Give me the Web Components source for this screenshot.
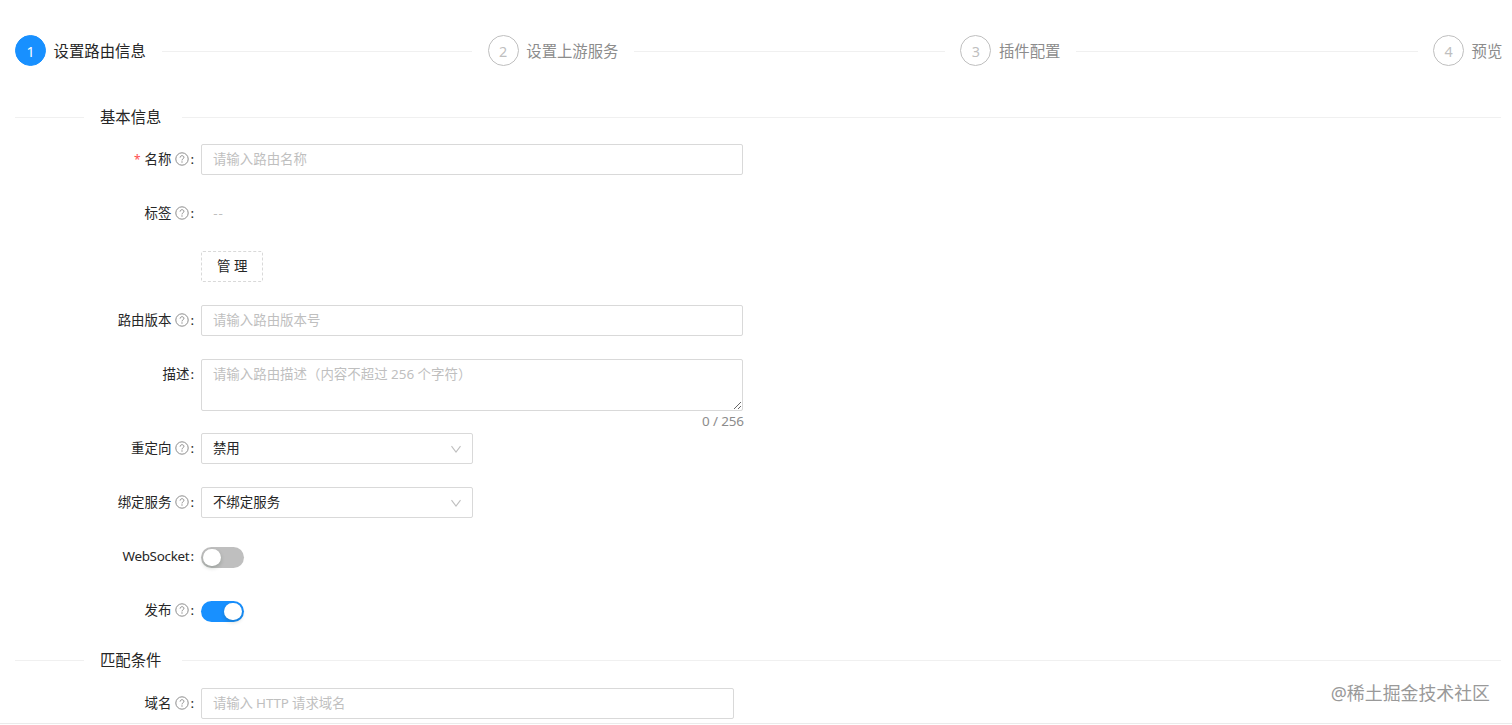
<!DOCTYPE html>
<html lang="zh-CN">
<head>
<meta charset="utf-8">
<title>设置路由信息</title>
<style>
    html, body {
        margin: 0;
        height: 725px;
        overflow: hidden;
        background: #fff;
    }
    body {
        font-family: "Noto Sans", "Noto Sans CJK SC", sans-serif;
        font-size: 13.44px;
        line-height: 21px;
        color: #262626;
    }
</style>
</head>
<body>
<route-page>
    <step-bar slot="steps">
        <step-item number="1" active>设置路由信息</step-item>
        <step-item number="2">设置上游服务</step-item>
        <step-item number="3">插件配置</step-item>
        <step-item number="4" last>预览</step-item>
    </step-bar>

    <section-divider>基本信息</section-divider>
    <form-row label="名称" required help><text-field placeholder="请输入路由名称"></text-field></form-row>
    <form-row label="标签" help><empty-value>--</empty-value></form-row>
    <form-row><dashed-button>管 理</dashed-button></form-row>
    <form-row label="路由版本" help><text-field placeholder="请输入路由版本号"></text-field></form-row>
    <form-row label="描述" class="tall"><text-block count="0 / 256" placeholder="请输入路由描述（内容不超过 256 个字符）"></text-block></form-row>
    <form-row label="重定向" help><select-box>禁用</select-box></form-row>
    <form-row label="绑定服务" help><select-box>不绑定服务</select-box></form-row>
    <form-row label="WebSocket" class="latin"><toggle-switch></toggle-switch></form-row>
    <form-row label="发布" help><toggle-switch checked></toggle-switch></form-row>

    <section-divider class="second">匹配条件</section-divider>
    <form-row label="域名" help><text-field class="short" placeholder="请输入 HTTP 请求域名"></text-field></form-row>

    <water-mark slot="mark">@稀土掘金技术社区</water-mark>
</route-page>

<script>
// Base class: renders the subclass template into an open shadow root
class BaseElement extends HTMLElement {
    constructor() {
        super();
        this.attachShadow({ mode: 'open' });
    }

    connectedCallback() {
        this.shadowRoot.innerHTML = this.render();
    }

    attr(name) {
        return this.getAttribute(name) || '';
    }
}

customElements.define('route-page', class extends BaseElement {
    render() {
        return `
            <style>
                :host {
                    display: block;
                    position: relative;
                    box-sizing: border-box;
                    height: 724px;
                    padding: 35px 11px 0 15px;
                    border-bottom: 1px solid #ebebeb;
                }
                .body { display: flex; flex-direction: column; }
                ::slotted(step-bar) { margin-bottom: 39px; }
                ::slotted(section-divider) { margin-bottom: 15px; }
                ::slotted(.second) { margin-top: 1px; margin-bottom: 15.6px; }
                ::slotted(form-row.tall) { height: 74.4px; margin-bottom: 0; }
            </style>
            <slot name="steps"></slot>
            <div class="body"><slot></slot></div>
            <slot name="mark"></slot>
        `;
    }
});

customElements.define('step-bar', class extends BaseElement {
    render() {
        return `
            <style>
                :host { display: flex; gap: 15.4px; margin-right: -3px; height: 32px; }
            </style>
            <slot></slot>
        `;
    }
});

customElements.define('step-item', class extends BaseElement {
    render() {
        return `
            <style>
                :host {
                    display: flex;
                    flex: 1;
                    align-items: center;
                    color: #8c8c8c;
                    font-size: 15.36px;
                    white-space: nowrap;
                }
                :host([last]) { flex: none; width: 71px; }
                :host([active]) { color: #262626; }
                .circle {
                    box-sizing: border-box;
                    flex: none;
                    width: 31px;
                    height: 31px;
                    margin: 0 7.6px 1px 0;
                    padding-top: 1px;
                    border: 1px solid #bfbfbf;
                    border-radius: 50%;
                    color: #bfbfbf;
                    font-size: 14.4px;
                    line-height: 29px;
                    text-align: center;
                }
                :host([active]) .circle { background: #1890ff; border-color: #1890ff; color: #fff; }
                .line { flex: 1; height: 1px; margin-left: 16px; background: #f0f0f0; }
                :host([last]) .line { display: none; }
            </style>
            <span class="circle">${this.attr('number')}</span>
            <slot></slot>
            <span class="line"></span>
        `;
    }
});

customElements.define('section-divider', class extends BaseElement {
    render() {
        return `
            <style>
                :host { display: flex; align-items: center; height: 23px; font-size: 15.36px; color: #262626; }
                i { height: 1px; background: #f0f0f0; }
                .left { width: 69px; margin-right: 16px; }
                .right { flex: 1; margin-left: 21px; }
            </style>
            <i class="left"></i><slot></slot><i class="right"></i>
        `;
    }
});

customElements.define('form-row', class extends BaseElement {
    render() {
        const label = this.attr('label');
        const star = this.hasAttribute('required') ? '<span class="star">*</span>' : '';
        const help = this.hasAttribute('help') ? '<help-icon></help-icon>' : '';
        return `
            <style>
                :host { display: flex; align-items: flex-start; height: 31px; margin-bottom: 22.75px; }
                .label {
                    display: flex;
                    align-items: center;
                    justify-content: flex-end;
                    width: 179.4px;
                    height: 31px;
                    margin-right: 6.9px;
                }
                :host(.latin) .label { letter-spacing: -.3px; }
                .star { margin-right: 4px; color: #ff4d4f; font-size: 12px; }
                help-icon { margin: 0 0 1px 4px; }
                .colon { width: 4px; margin-left: 1px; }
            </style>
            <span class="label">${star}${label}${help}${label ? '<span class="colon">:</span>' : ''}</span>
            <slot></slot>
        `;
    }
});

customElements.define('help-icon', class extends BaseElement {
    render() {
        return `
            <style>
                :host { display: block; width: 14px; height: 14px; }
                svg { display: block; }
            </style>
            <svg width="14" height="14" viewBox="0 0 14 14" fill="none" stroke="#8c8c8c">
                <circle cx="7" cy="7" r="6.2"/>
                <path d="M5.1 5.6C5.1 3.1 8.9 3.1 8.9 5.4C8.9 6.9 7 6.7 7 8.4" stroke-width="1"/>
                <circle cx="7" cy="10" r=".65" fill="#8c8c8c" stroke="none"/>
            </svg>
        `;
    }
});

customElements.define('text-field', class extends BaseElement {
    render() {
        return `
            <style>
                :host { display: block; width: 542px; height: 31px; }
                :host(.short) { width: 533px; }
                input {
                    box-sizing: border-box;
                    display: block;
                    width: 100%;
                    height: 100%;
                    margin: 0;
                    padding: 0 11px 1.4px 10.6px;
                    border: 1px solid #d9d9d9;
                    border-radius: 2px;
                    outline: none;
                    font: inherit;
                    color: #262626;
                }
                input::placeholder { color: #bfbfbf; }
                :host(.short) input::placeholder { letter-spacing: -.15px; }
            </style>
            <input placeholder="${this.attr('placeholder')}">
        `;
    }
});

customElements.define('text-block', class extends BaseElement {
    render() {
        return `
            <style>
                :host { display: block; width: 542px; }
                textarea {
                    box-sizing: border-box;
                    display: block;
                    width: 100%;
                    height: 52px;
                    margin: 0;
                    padding: 4px 11px 4px 10.6px;
                    border: 1px solid #d9d9d9;
                    border-radius: 2px;
                    outline: none;
                    font: inherit;
                    resize: vertical;
                }
                textarea::placeholder { color: #bfbfbf; }
                .count { margin-right: -.5px; color: #8c8c8c; text-align: right; letter-spacing: -.15px; }
            </style>
            <textarea placeholder="${this.attr('placeholder')}"></textarea>
            <div class="count">${this.attr('count')}</div>
        `;
    }
});

customElements.define('select-box', class extends BaseElement {
    render() {
        return `
            <style>
                :host {
                    box-sizing: border-box;
                    display: flex;
                    align-items: center;
                    justify-content: space-between;
                    width: 272px;
                    height: 31px;
                    padding: 0 10px 0 10.6px;
                    border: 1px solid #d9d9d9;
                    border-radius: 2px;
                }
            </style>
            <span><slot></slot></span>
            <svg width="12" height="12" viewBox="0 0 12 12" fill="none" stroke="#bfbfbf" stroke-width="1.1">
                <path d="M1.5 3.2L6 9L10.5 3.2"/>
            </svg>
        `;
    }
});

customElements.define('empty-value', class extends BaseElement {
    render() {
        return `
            <style>
                :host { display: block; padding-left: 12px; line-height: 31px; color: #bfbfbf; letter-spacing: .8px; }
            </style>
            <slot></slot>
        `;
    }
});

customElements.define('dashed-button', class extends BaseElement {
    render() {
        return `
            <style>
                :host { display: block; margin-top: -.6px; }
                button {
                    box-sizing: border-box;
                    width: 62px;
                    height: 31px;
                    padding: 0;
                    border: 1px dashed #d9d9d9;
                    border-radius: 2px;
                    background: #fff;
                    font: inherit;
                    color: #262626;
                }
            </style>
            <button><slot></slot></button>
        `;
    }
});

customElements.define('toggle-switch', class extends BaseElement {
    render() {
        return `
            <style>
                :host {
                    box-sizing: border-box;
                    display: flex;
                    width: 42.3px;
                    height: 21px;
                    margin-top: 5.9px;
                    padding: 2px;
                    border-radius: 11px;
                    background: #bfbfbf;
                }
                :host([checked]) { justify-content: flex-end; background: #1890ff; }
                span {
                    width: 17.3px;
                    height: 17.3px;
                    border-radius: 50%;
                    background: #fff;
                    box-shadow: 0 2px 4px rgba(0, 35, 11, .2);
                }
            </style>
            <span></span>
        `;
    }
});

customElements.define('water-mark', class extends BaseElement {
    render() {
        return `
            <style>
                :host {
                    position: absolute;
                    right: 22px;
                    bottom: 18px;
                    font-size: 17.9px;
                    line-height: 24px;
                    color: #999;
                }
            </style>
            <slot></slot>
        `;
    }
});
</script>
</body>
</html>
